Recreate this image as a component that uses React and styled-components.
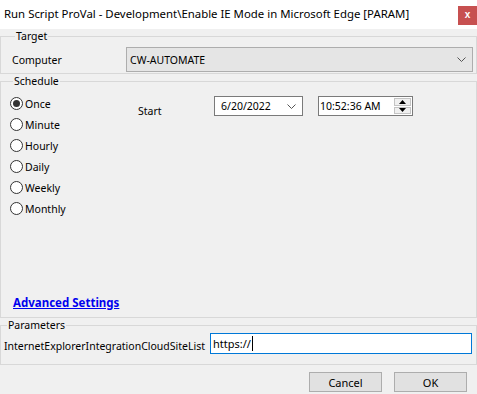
import React from "react";
import styled, { createGlobalStyle } from "styled-components";

const Global = createGlobalStyle`
  html, body { margin: 0; padding: 0; background: #f0f0f0; }
  body { font-family: "Noto Sans", "Segoe UI", "Open Sans", sans-serif; font-size: 10.5px; color: #000; }
  * { box-sizing: border-box; }
`;

const Window = styled.div`
  width: 477px;
  height: 394px;
  display: flex;
  flex-direction: column;
  background: #f0f0f0;
  overflow: hidden;
`;

const TitleBar = styled.div`
  height: 29px;
  flex: none;
  background: #fff;
  display: flex;
  align-items: center;
  justify-content: space-between;
  padding-left: 4px;
  font-size: 11.4px;
`;

const TitleText = styled.span`
  margin-top: -2px;
`;

const CloseBtn = styled.div`
  width: 19px;
  height: 19px;
  margin-top: 6px;
  align-self: flex-start;
  background: #c75050;
  color: #fff;
  display: flex;
  align-items: center;
  justify-content: center;
  font-family: "Liberation Sans", sans-serif;
  font-size: 10px;
  font-weight: bold;
  padding-bottom: 2px;
`;

const Body = styled.div`
  flex: 1;
  display: flex;
  flex-direction: column;
`;

const Group = styled.fieldset`
  margin: 0;
  padding: ${(p) => p.$pad};
  border: 1px solid #d8d8d8;
  min-width: 0;
  width: 477px;
  flex: none;
`;

const Legend = styled.legend`
  padding: 0 1px;
  margin-left: 3px;
  line-height: 15px;
`;

const Row = styled.div`
  display: flex;
  align-items: center;
  height: ${(p) => p.$h}px;
`;

const FieldLabel = styled.span`
  width: ${(p) => p.$w}px;
  flex: none;
  margin-top: ${(p) => p.$mt || 0}px;
`;

const Select = styled.div`
  flex: 1;
  height: 25px;
  background: #e5e5e5;
  border: 1px solid #adadad;
  display: flex;
  align-items: center;
  justify-content: space-between;
  padding: 0 6px 0 3px;
`;

const ScheduleBody = styled.div`
  height: 214px;
  display: flex;
  flex-direction: column;
  justify-content: space-between;
`;

const ScheduleTop = styled.div`
  display: flex;
`;

const RadioList = styled.div`
  display: flex;
  flex-direction: column;
  gap: 8px;
  width: 128px;
  padding-top: 1px;
`;

const RadioRow = styled.label`
  display: flex;
  align-items: center;
  gap: 2px;
  height: 13px;
`;

const RadioCircle = styled.span`
  width: 13px;
  height: 13px;
  flex: none;
  border-radius: 50%;
  border: 1px solid #333;
  background: #fff;
  display: flex;
  align-items: center;
  justify-content: center;
  &::after {
    content: "";
    display: ${(p) => (p.$on ? "block" : "none")};
    width: 7px;
    height: 7px;
    border-radius: 50%;
    background: #333;
  }
`;

const StartRow = styled.div`
  display: flex;
  align-items: center;
  height: 20px;
`;

const Picker = styled.div`
  width: ${(p) => p.$w}px;
  height: 20px;
  background: #fff;
  border: 1px solid #7a7a7a;
  display: flex;
  align-items: center;
  justify-content: space-between;
  padding: 0 ${(p) => p.$pr || 0}px 0 ${(p) => p.$pl}px;
  margin-right: ${(p) => p.$mr || 0}px;
`;

const Spinner = styled.div`
  width: 17px;
  height: 16px;
  display: flex;
  flex-direction: column;
  gap: 1px;
`;

const SpinHalf = styled.div`
  flex: 1;
  background: #f0f0f0;
  border: 1px solid #c4c4c4;
  display: flex;
  align-items: center;
  justify-content: center;
`;

const Link = styled.a`
  color: #0000ee;
  font-weight: bold;
  font-size: 11.5px;
  text-decoration: underline;
  margin-left: 3px;
  line-height: 15px;
  cursor: pointer;
`;

const TextBox = styled.div`
  flex: 1;
  height: 21px;
  background: #fff;
  border: 1px solid #0078d7;
  display: flex;
  align-items: center;
  padding-left: 2px;
  font-size: 11px;
`;

const Caret = styled.span`
  width: 1px;
  height: 15px;
  margin-left: 1px;
  background: #000;
`;

const Footer = styled.div`
  display: flex;
  justify-content: flex-end;
  gap: 12px;
  padding: 7px 10px 0 0;
`;

const Button = styled.button`
  width: 73px;
  height: 20px;
  background: #e1e1e1;
  border: 1px solid #adadad;
  font: inherit;
  font-size: 11px;
  color: #000;
  padding: 0;
`;

const Chevron = () => (
  <svg width="9" height="5" viewBox="0 0 9 5">
    <path d="M0.5 0.5 L4.5 4.5 L8.5 0.5" fill="none" stroke="#555" strokeWidth="1" />
  </svg>
);

const Tri = ({ up }) => (
  <svg width="7" height="4" viewBox="0 0 7 4">
    <path d={up ? "M0 4 L3.5 0 L7 4 Z" : "M0 0 L3.5 4 L7 0 Z"} fill="#000" />
  </svg>
);

const radios = ["Once", "Minute", "Hourly", "Daily", "Weekly", "Monthly"];

export default function App() {
  return (
    <Window>
      <Global />
      <TitleBar>
        <TitleText>Run Script ProVal - Development\Enable IE Mode in Microsoft Edge [PARAM]</TitleText>
        <CloseBtn>x</CloseBtn>
      </TitleBar>
      <Body>
        <Group $pad="3px 3px 1px 11px">
          <Legend>Target</Legend>
          <Row $h={25}>
            <FieldLabel $w={114} $mt={1}>Computer</FieldLabel>
            <Select>
              <span>CW-AUTOMATE</span>
              <Chevron />
            </Select>
          </Row>
        </Group>
        <Group $pad="7px 0 7px 9px">
          <Legend>Schedule</Legend>
          <ScheduleBody>
            <ScheduleTop>
              <RadioList>
                {radios.map((r, i) => (
                  <RadioRow key={r}>
                    <RadioCircle $on={i === 0} />
                    {r}
                  </RadioRow>
                ))}
              </RadioList>
              <StartRow>
                <FieldLabel $w={76} $mt={9}>Start</FieldLabel>
                <Picker $w={89} $pl={6} $pr={6} $mr={15}>
                  <span>6/20/2022</span>
                  <Chevron />
                </Picker>
                <Picker $w={95} $pl={1} $pr={1}>
                  <span>10:52:36 AM</span>
                  <Spinner>
                    <SpinHalf><Tri up /></SpinHalf>
                    <SpinHalf><Tri /></SpinHalf>
                  </Spinner>
                </Picker>
              </StartRow>
            </ScheduleTop>
            <Link>Advanced Settings</Link>
          </ScheduleBody>
        </Group>
        <Group $pad="0 4px 10px 3px">
          <Legend>Parameters</Legend>
          <Row $h={21}>
            <FieldLabel $w={206} $mt={5}>InternetExplorerIntegrationCloudSiteList</FieldLabel>
            <TextBox>
              https://<Caret />
            </TextBox>
          </Row>
        </Group>
        <Footer>
          <Button>Cancel</Button>
          <Button>OK</Button>
        </Footer>
      </Body>
    </Window>
  );
}
